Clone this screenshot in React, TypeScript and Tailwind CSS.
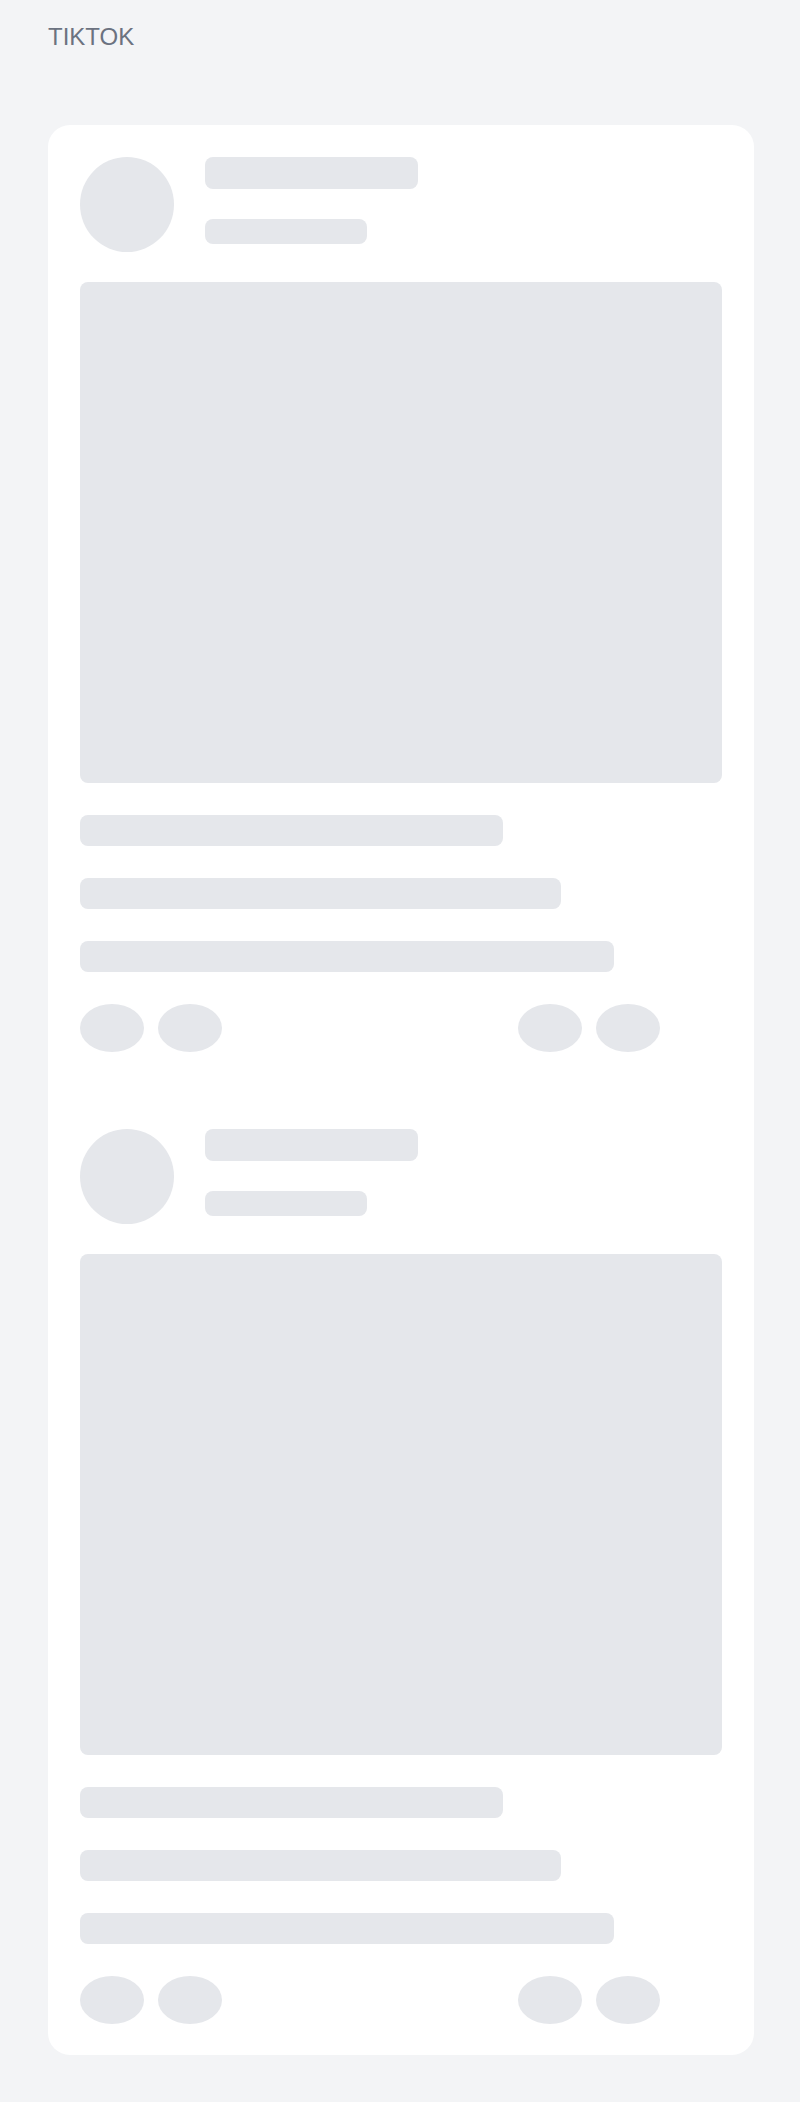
import React from "react";

const Bone = ({ className }: { className: string }) => (
  <div className={`bg-[#e5e7eb] ${className}`} />
);

// the action buttons are ovals, not pills
const Oval = () => <Bone className="w-16 h-12 rounded-[50%]" />;

const PostSkeleton = () => {
  return (
    <div className="flex flex-col">
      <div className="flex items-start gap-[31px]">
        <Bone className="w-[94px] h-[95px] rounded-[50%] shrink-0" />
        <div className="flex flex-col gap-[30px]">
          <Bone className="w-[213px] h-8 rounded-lg" />
          <Bone className="w-[162px] h-[25px] rounded-lg" />
        </div>
      </div>
      <Bone className="w-full h-[501px] rounded-lg mt-[30px]" />
      <div className="flex flex-col gap-8 mt-8">
        <Bone className="w-[423px] h-[31px] rounded-lg" />
        <Bone className="w-[481px] h-[31px] rounded-lg" />
        <Bone className="w-[534px] h-[31px] rounded-lg" />
      </div>
      <div className="flex justify-between pr-[62px] mt-8">
        <div className="flex gap-[14px]">
          <Oval />
          <Oval />
        </div>
        <div className="flex gap-[14px]">
          <Oval />
          <Oval />
        </div>
      </div>
    </div>
  );
};

const App = () => {
  return (
    <div className="min-h-screen bg-[#f3f4f6] pl-12 pr-[46px] pt-[21px] pb-[47px] font-['Liberation_Sans',Arial,sans-serif]">
      <h1 className="text-2xl leading-8 text-[#6b7280] mb-[72px]">TIKTOK</h1>
      <div className="bg-white rounded-[22px] pt-8 pb-[31px] px-8 flex flex-col gap-[77px]">
        <PostSkeleton />
        <PostSkeleton />
      </div>
    </div>
  );
};

export default App;
